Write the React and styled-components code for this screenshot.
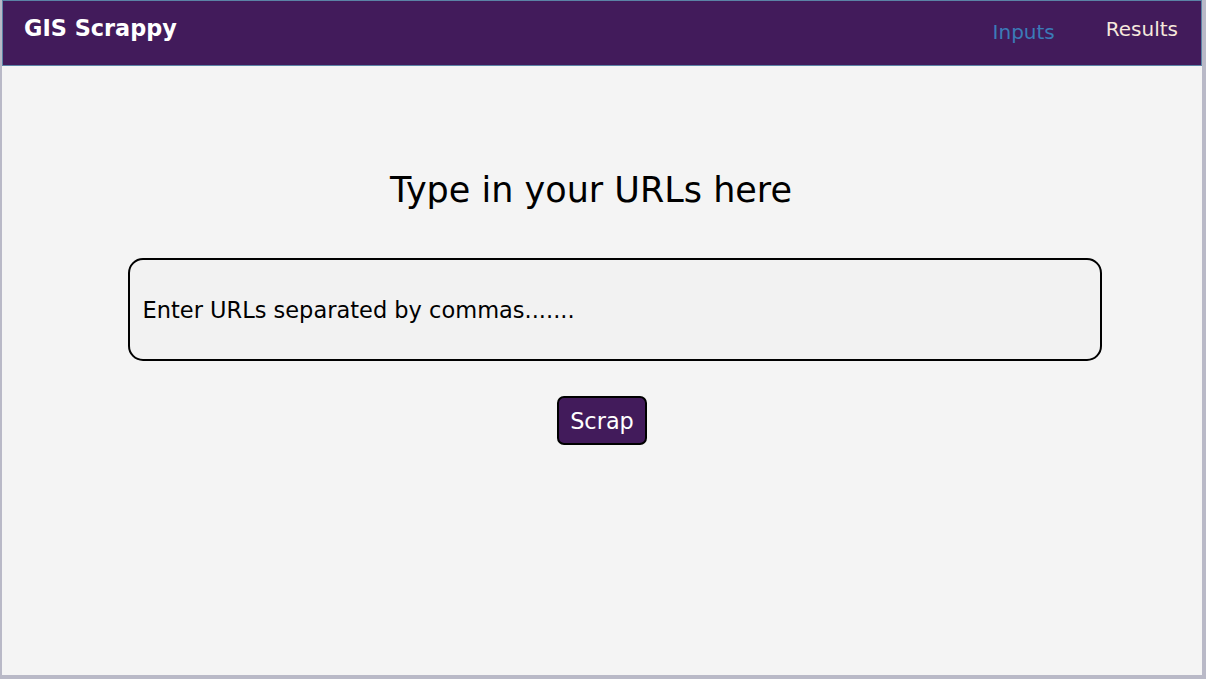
import React from "react";
import styled, { createGlobalStyle } from "styled-components";

const Global = createGlobalStyle`
  html, body { margin: 0; padding: 0; }
  body {
    background: #b9b9c7;
    font-family: "DejaVu Sans", "Liberation Sans", sans-serif;
  }
  * { box-sizing: border-box; }
`;

const Frame = styled.div`
  margin: 0 4px 0 2px;
  height: 675px;
  background: #f4f4f4;
  display: flex;
  flex-direction: column;
`;

const NavBar = styled.nav`
  height: 66px;
  background: #421b5b;
  border: 1px solid #5b83a6;
  display: flex;
  align-items: flex-start;
  justify-content: space-between;
  padding: 0 23px 0 21px;
`;

const Brand = styled.div`
  color: #ffffff;
  font-weight: bold;
  font-size: 22.4px;
  line-height: 26px;
  margin-top: 14px;
`;

const Links = styled.div`
  display: flex;
  align-items: flex-start;
  gap: 51px;
`;

const NavLink = styled.a`
  font-size: 20px;
  line-height: 24px;
  color: ${(p) => (p.$active ? "#3b7bb8" : "#f6e8dc")};
  margin-top: ${(p) => (p.$active ? "19px" : "16px")};
  text-decoration: none;
  cursor: pointer;
`;

const Main = styled.main`
  flex: 1;
  display: flex;
  flex-direction: column;
  align-items: center;
  padding-top: 103px;
`;

const Title = styled.h1`
  margin: 0 22px 0 0;
  font-weight: normal;
  font-size: 35px;
  line-height: 42px;
  color: #000;
`;

const UrlInput = styled.input`
  align-self: flex-start;
  margin: 47px 0 0 126px;
  width: 974px;
  height: 103px;
  border: 2.5px solid #000;
  border-radius: 15px;
  background: #f2f2f2;
  padding: 0 12.5px;
  font-family: "DejaVu Sans", "Liberation Sans", sans-serif;
  font-size: 22.5px;
  color: #000;
  outline: none;
  &::placeholder { color: #000; opacity: 1; }
`;

const ScrapButton = styled.button`
  margin-top: 35px;
  height: 49px;
  padding: 0 11px;
  background: #421b5b;
  color: #ffffff;
  border: 2.5px solid #000;
  border-radius: 7px;
  font-family: "DejaVu Sans", "Liberation Sans", sans-serif;
  font-size: 22.4px;
  line-height: 26px;
  cursor: pointer;
`;

export default function App() {
  return (
    <>
      <Global />
      <Frame>
        <NavBar>
          <Brand>GIS Scrappy</Brand>
          <Links>
            <NavLink $active>Inputs</NavLink>
            <NavLink>Results</NavLink>
          </Links>
        </NavBar>
        <Main>
          <Title>Type in your URLs here</Title>
          <UrlInput placeholder="Enter URLs separated by commas......." />
          <ScrapButton>Scrap</ScrapButton>
        </Main>
      </Frame>
    </>
  );
}
